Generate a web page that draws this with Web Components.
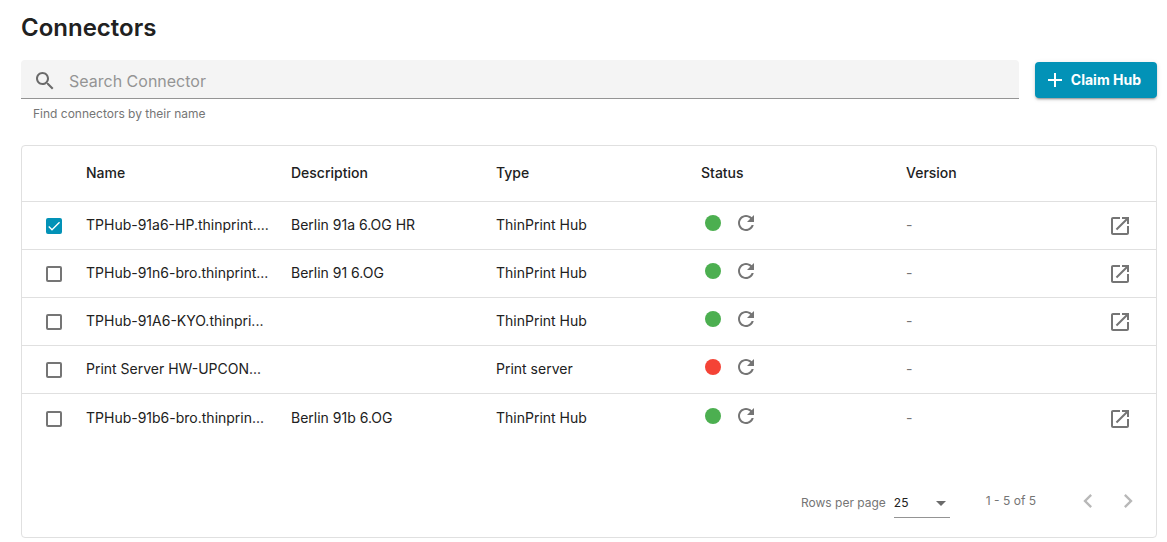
<!DOCTYPE html>
<html lang="en">
<head>
<meta charset="utf-8">
<meta name="viewport" content="width=device-width, initial-scale=1">
<title>Connectors</title>
<style>
  :root {
    --primary: #0292b7;
    --text: #212121;
    --muted: #757575;
    --line: #e0e0e0;
  }
  body {
    margin: 0;
    background: #fff;
    color: var(--text);
    font: 14px/20px Inter, "Liberation Sans", sans-serif;
  }
</style>
</head>
<body>
<connectors-page>
  <span slot="title">Connectors</span>
  <search-field slot="toolbar" label="Search Connector">Find connectors by their name</search-field>
  <action-button slot="toolbar">Claim Hub</action-button>
  <connector-table></connector-table>
</connectors-page>

<script>
const connectors = [
  {name:'TPHub-91a6-HP.thinprint....',description:'Berlin 91a 6.OG HR',type:'ThinPrint Hub',online:true,version:'-',link:true,checked:true},
  {name:'TPHub-91n6-bro.thinprint...',description:'Berlin 91 6.OG',type:'ThinPrint Hub',online:true,version:'-',link:true},
  {name:'TPHub-91A6-KYO.thinpri...',description:'',type:'ThinPrint Hub',online:true,version:'-',link:true},
  {name:'Print Server HW-UPCON...',description:'',type:'Print server',online:false,version:'-',link:false},
  {name:'TPHub-91b6-bro.thinprin...',description:'Berlin 91b 6.OG',type:'ThinPrint Hub',online:true,version:'-',link:true}
];

const icons = {
  search: 'M15.5 14h-.79l-.28-.27C15.41 12.59 16 11.11 16 9.5 16 5.91 13.09 3 9.5 3S3 5.91 3 9.5 5.91 16 9.5 16c1.61 0 3.09-.59 4.23-1.57l.27.28v.79l5 4.99L20.49 19l-4.99-5zm-6 0C7.01 14 5 11.99 5 9.5S7.01 5 9.5 5 14 7.01 14 9.5 11.99 14 9.5 14z',
  add: 'M19 13h-6v6h-2v-6H5v-2h6V5h2v6h6v2z',
  refresh: 'M17.65 6.35C16.2 4.9 14.21 4 12 4c-4.42 0-7.99 3.58-7.99 8s3.57 8 7.99 8c3.73 0 6.84-2.55 7.73-6h-2.08c-.82 2.33-3.04 4-5.65 4-3.31 0-6-2.69-6-6s2.69-6 6-6c1.66 0 3.14.69 4.22 1.78L13 11h7V4l-2.35 2.35z',
  open: 'M19 19H5V5h7V3H5c-1.11 0-2 .9-2 2v14c0 1.1.89 2 2 2h14c1.1 0 2-.9 2-2v-7h-2v7zM14 3v2h3.59l-9.83 9.83 1.41 1.41L19 6.41V10h2V3h-7z',
  prev: 'M15.41 7.41L14 6l-6 6 6 6 1.41-1.41L10.83 12z',
  next: 'M10 6L8.59 7.41 13.17 12l-4.58 4.59L10 18l6-6z'
};

const icon = (name, size = 24, box = '0 0 24 24') =>
  `<svg width="${size}" height="${size}" viewBox="${box}" fill="currentColor" aria-hidden="true"><path d="${icons[name]}"/></svg>`;

const base = `
  * { box-sizing: border-box; }
  svg { display: block; flex: none; }
  button, input, select { font: inherit; color: inherit; margin: 0; }
  button { display: inline-flex; padding: 0; border: 0; background: none; cursor: pointer; }
`;

class ConnectorsPage extends HTMLElement {
  constructor() {
    super();
    this.attachShadow({ mode: 'open' });
  }

  connectedCallback() {
    this.shadowRoot.innerHTML = `
      <style>
        ${base}
        :host {
          display: block;
          padding: 12px 10px 4px 21px;
        }
        h1 {
          margin: 0 0 16px;
          font-size: 24px;
          line-height: 32px;
          font-weight: 600;
        }
        .toolbar {
          display: flex;
          align-items: flex-start;
          gap: 16px;
          margin-bottom: 21px;
        }
      </style>
      <h1><slot name="title"></slot></h1>
      <div class="toolbar"><slot name="toolbar"></slot></div>
      <slot></slot>
    `;
  }
}

class SearchField extends HTMLElement {
  constructor() {
    super();
    this.attachShadow({ mode: 'open' });
  }

  connectedCallback() {
    const label = this.getAttribute('label');
    this.shadowRoot.innerHTML = `
      <style>
        ${base}
        :host {
          display: block;
          flex: 1;
          min-width: 0;
        }
        .box {
          display: flex;
          align-items: center;
          gap: 12px;
          height: 39px;
          padding: 4px 12px 0;
          background: #f4f4f4;
          border-bottom: 1px solid #949494;
          border-radius: 4px 4px 0 0;
          color: #6b6b6b;
        }
        input {
          flex: 1;
          min-width: 0;
          padding: 0;
          border: 0;
          outline: 0;
          background: none;
          font-size: 16px;
          line-height: 24px;
        }
        input::placeholder {
          color: #949494;
          opacity: 1;
        }
        .hint {
          padding: 5px 12px 0;
          color: var(--muted);
          font-size: 12px;
        }
      </style>
      <div class="box">
        ${icon('search')}
        <input type="text" aria-label="${label}" placeholder="${label}" aria-describedby="hint">
      </div>
      <div class="hint" id="hint"><slot></slot></div>
    `;
  }
}

class ActionButton extends HTMLElement {
  constructor() {
    super();
    this.attachShadow({ mode: 'open' });
  }

  connectedCallback() {
    this.shadowRoot.innerHTML = `
      <style>
        ${base}
        :host {
          display: block;
          margin-top: 2px;
        }
        button {
          align-items: center;
          gap: 4px;
          height: 36px;
          padding: 0 16px 0 8px;
          border-radius: 4px;
          background: var(--primary);
          box-shadow: 0 3px 1px -2px rgba(0,0,0,.2), 0 2px 2px rgba(0,0,0,.14), 0 1px 5px rgba(0,0,0,.12);
          color: #fff;
          font-weight: 700;
          white-space: nowrap;
        }
      </style>
      <button type="button">${icon('add')}<slot></slot></button>
    `;
  }
}

class ConnectorTable extends HTMLElement {
  constructor() {
    super();
    this.attachShadow({ mode: 'open' });
  }

  connectedCallback() {
    this.render();
  }

  render() {
    this.shadowRoot.innerHTML = `
      <style>
        ${base}
        :host {
          display: block;
          border: 1px solid var(--line);
          border-radius: 4px;
        }
        table {
          width: 100%;
          table-layout: fixed;
          border-collapse: separate;
          border-spacing: 0;
        }
        .check-col { width: 64px; }
        .open-col { width: 45px; }
        th, td {
          height: 48px;
          padding: 0 0 2px;
          border-bottom: 1px solid var(--line);
          text-align: left;
          vertical-align: middle;
          white-space: nowrap;
          overflow: hidden;
          text-overflow: ellipsis;
        }
        th {
          height: 56px;
          font-weight: 500;
        }
        tr:last-child td {
          height: 49px;
          border-bottom: 0;
        }
        .check { padding: 0 0 0 24px; }
        input {
          display: block;
          appearance: none;
          width: 16px;
          height: 16px;
          border: 2px solid var(--muted);
          border-radius: 2px;
        }
        input:checked {
          border-color: var(--primary);
          background: var(--primary) url("data:image/svg+xml,%3Csvg xmlns='http://www.w3.org/2000/svg' viewBox='0 0 24 24'%3E%3Cpath d='M4.1 12.7 9 17.6 20.3 6.3' fill='none' stroke='white' stroke-width='2'/%3E%3C/svg%3E") center / 16px no-repeat;
          background-origin: border-box;
        }
        .status {
          display: flex;
          align-items: center;
          gap: 16px;
          padding: 0 4px 4px;
          color: var(--muted);
        }
        .dot {
          width: 16px;
          height: 16px;
          border-radius: 50%;
          background: #f44336;
        }
        .dot.online { background: #4caf50; }
        .version {
          color: var(--muted);
          padding-bottom: 2px;
        }
        .open { padding: 0; }
        .open a {
          display: block;
          color: var(--muted);
        }
      </style>
      <table>
        <colgroup>
          <col class="check-col"><col><col><col><col><col><col class="open-col">
        </colgroup>
        <thead>
          <tr>
            <th></th>
            <th scope="col">Name</th>
            <th scope="col">Description</th>
            <th scope="col">Type</th>
            <th scope="col">Status</th>
            <th scope="col">Version</th>
            <th></th>
          </tr>
        </thead>
        <tbody>
          ${connectors.map(row => `
            <tr>
              <td class="check"><input type="checkbox" aria-label="Select ${row.name}" ${row.checked ? 'checked' : ''}></td>
              <td>${row.name}</td>
              <td>${row.description}</td>
              <td>${row.type}</td>
              <td>
                <div class="status">
                  <span class="dot ${row.online ? 'online' : ''}"></span>
                  <button type="button" aria-label="Refresh status">${icon('refresh', 18, '3 3 18 18')}</button>
                </div>
              </td>
              <td class="version">${row.version}</td>
              <td class="open">${row.link ? `<a href="#" aria-label="Open ${row.name}">${icon('open', 18, '3 3 18 18')}</a>` : ''}</td>
            </tr>
          `).join('')}
        </tbody>
      </table>
      <table-pager></table-pager>
    `;
  }
}

class TablePager extends HTMLElement {
  constructor() {
    super();
    this.attachShadow({ mode: 'open' });
  }

  connectedCallback() {
    this.shadowRoot.innerHTML = `
      <style>
        ${base}
        :host {
          display: flex;
          justify-content: flex-end;
          align-items: center;
          margin-top: 38px;
          padding: 0 8px 16px;
          color: var(--muted);
          font-size: 12px;
        }
        .size {
          display: flex;
          align-items: center;
          gap: 8px;
          padding-top: 4px;
        }
        .select {
          display: flex;
          position: relative;
          width: 56px;
          border-bottom: 1px solid #949494;
        }
        .select::after {
          content: "";
          position: absolute;
          right: 4px;
          top: 12px;
          border: 5px solid transparent;
          border-top-color: #6b6b6b;
          border-bottom: 0;
          pointer-events: none;
        }
        select {
          appearance: none;
          width: 100%;
          height: 28px;
          padding: 0;
          border: 0;
          background: none;
          color: var(--text);
        }
        .range { margin: 0 32px 0 36px; }
        button {
          width: 40px;
          height: 40px;
          align-items: center;
          justify-content: center;
          color: #b8b8b8;
        }
      </style>
      <div class="size">
        <label for="size">Rows per page</label>
        <div class="select">
          <select id="size"><option>10</option><option selected>25</option><option>50</option></select>
        </div>
      </div>
      <span class="range">1 - 5 of 5</span>
      <button type="button" aria-label="Previous page" disabled>${icon('prev', 28)}</button>
      <button type="button" aria-label="Next page" disabled>${icon('next', 28)}</button>
    `;
  }
}

customElements.define('connectors-page', ConnectorsPage);
customElements.define('search-field', SearchField);
customElements.define('action-button', ActionButton);
customElements.define('connector-table', ConnectorTable);
customElements.define('table-pager', TablePager);
</script>
</body>
</html>
